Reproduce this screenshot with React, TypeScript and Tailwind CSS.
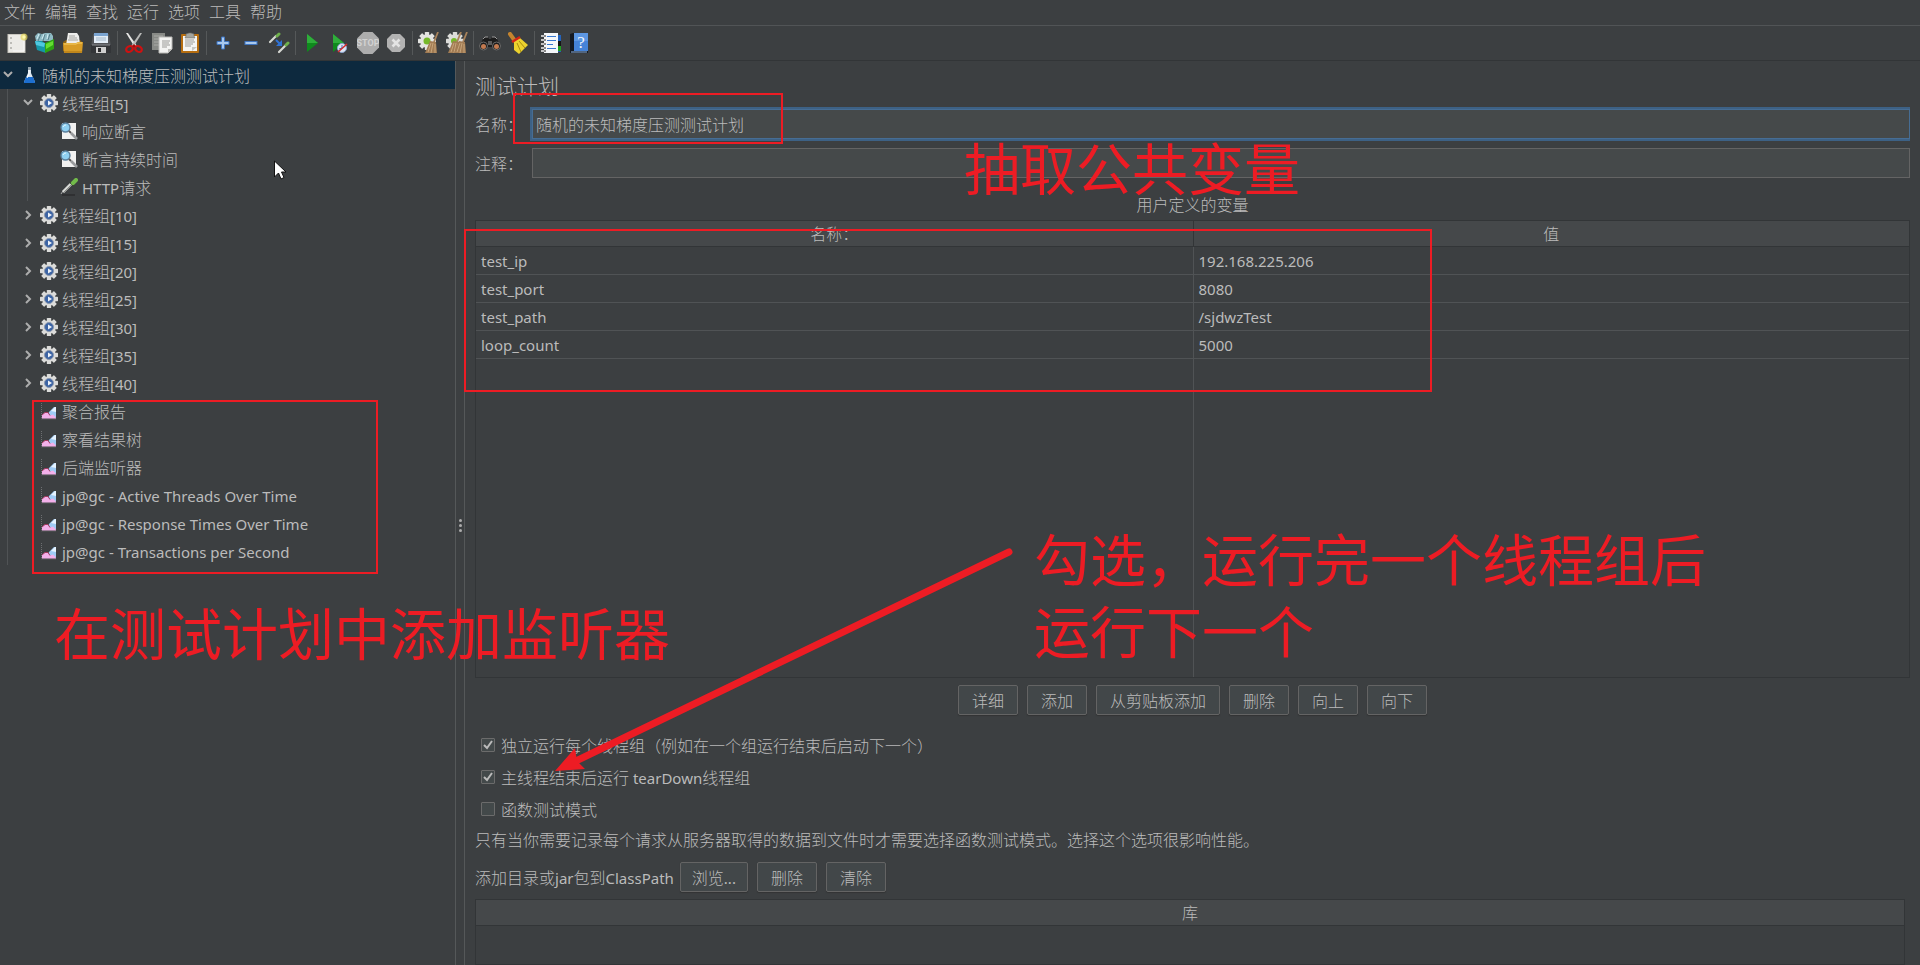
import React from 'react'

const FONT = "font-['Noto_Sans','Noto_Sans_CJK_SC',sans-serif]";

/* ---------- toolbar icons ---------- */

const Icon = ({ children }: { children: React.ReactNode }) => (
    <svg width="22" height="22" viewBox="0 0 22 22" aria-hidden="true">{children}</svg>
);

const Gear = ({ cx, cy, r, fill }: { cx: number; cy: number; r: number; fill: string }) => (
    <g transform={`translate(${cx} ${cy})`} fill={fill}>
        {[0, 45, 90, 135].map((a) => (
            <rect key={a} x={-r * 0.24} y={-r} width={r * 0.48} height={r * 2} rx="0.6" transform={`rotate(${a})`} />
        ))}
        <circle r={r * 0.76} />
    </g>
);

const NewIcon = () => (
    <Icon>
        <rect x="2" y="2.500" width="17" height="18" fill="#ecebe7" stroke="#c9c7c0" />
        <path d="M5 5v2M5 10v2M5 15v2" stroke="#8d8d88" />
        <path d="M7 19h11V9" fill="none" stroke="#f9f9f8" />
        <circle cx="18" cy="5" r="3.500" fill="#e8d85c" opacity="0.7" />
        <circle cx="18" cy="5" r="1.700" fill="#fff9ae" />
    </Icon>
);

const TemplatesIcon = () => (
    <Icon>
        <path d="M1 4 4 1l4 1 3-1 6 0 2 3v5H2z" fill="#8fbac4" />
        <path d="M4 9l3-7M9 9l2-7M14 8l2-6" stroke="#587f8a" />
        <path d="M3 7l2-5M8 7l2-5M13 7l1-5" stroke="#d3edf3" />
        <path d="M1 9h7l4 3v9l-9-3z" fill="#1697a8" />
        <path d="M1 9l10 2-1 4-8-2z" fill="#4fc8e0" />
        <path d="M11 11l9-4v10l-9 4z" fill="#2ea512" />
        <path d="M12 12l7-3v4l-7 4z" fill="#66dd33" />
    </Icon>
);

const OpenIcon = () => (
    <Icon>
        <path d="M1 10l3-2h14l2 2v9H1z" fill="#8c6212" />
        <path d="M6 1h9l2 3 1 9H4z" fill="#eeeeec" />
        <path d="M7 4h6M7 6h8M6 8h10" stroke="#a5a5a1" />
        <path d="M1 11h13l2-1h5l-1 11H2z" fill="#d89c26" />
        <path d="M2 12h12l2-1h4" fill="none" stroke="#f6cf67" />
        <path d="M2 20h18" stroke="#a87010" />
    </Icon>
);

const SaveIcon = () => (
    <Icon>
        <path d="M3 2h16l2 13v6H1v-6z" fill="#54565a" />
        <path d="M4 1h14v10H4z" fill="#e3edf7" />
        <path d="M4 1h14v3H4z" fill="#7ba5d2" />
        <path d="M6 6h10M6 8h10" stroke="#a4b8ca" />
        <path d="M1 13h20v8H1z" fill="#333538" />
        <path d="M2 13h18" stroke="#8a8c90" />
        <path d="M6 15h10v6H6z" fill="#cfcfcf" />
        <path d="M8 16h3v4H8z" fill="#2c2c2e" />
    </Icon>
);

const CutIcon = () => (
    <Icon>
        <path d="M3 1h2l9 13-3 0z" fill="#e6e6e4" />
        <path d="M19 1h-2L8 14l3 0z" fill="#b9bab8" />
        <ellipse cx="6.500" cy="17" rx="3.500" ry="2.700" fill="none" stroke="#cf1111" strokeWidth="2.200" transform="rotate(-28 6.500 17)" />
        <ellipse cx="15.500" cy="17" rx="3.500" ry="2.700" fill="none" stroke="#cf1111" strokeWidth="2.200" transform="rotate(28 15.500 17)" />
        <path d="M9 14l2-2 2 2-2 1z" fill="#a60d0d" />
    </Icon>
);

const CopyIcon = () => (
    <Icon>
        <path d="M1 1h13v17H1z" fill="#888a86" />
        <path d="M3 4h9M3 7h6M3 10h5M3 13h5" stroke="#a9aaa6" />
        <path d="M8 5h13v12l-4 4H8z" fill="#f4f4f2" stroke="#b9b9b6" />
        <path d="M11 9h8M11 11h7M11 13h8M11 15h5" stroke="#9b9b98" />
        <path d="M17 21v-4h4z" fill="#bdbdb9" />
    </Icon>
);

const PasteIcon = () => (
    <Icon>
        <rect x="2" y="2" width="18" height="19" rx="1" fill="#b56d10" />
        <rect x="4" y="4" width="14" height="15" fill="#f5f5f3" />
        <path d="M6 8h9M6 10h10M6 12h8M6 14h6" stroke="#9b9b98" />
        <path d="M13 19v-4h5z" fill="#c7c7c3" />
        <path d="M7 4V2l3-1h2l3 1v2l1 2H6z" fill="#a3a49e" stroke="#6b6c67" strokeWidth="0.600" />
    </Icon>
);

const PlusIcon = () => (
    <Icon>
        <path d="M9.500 5h3v4.500H17v3h-4.500V17h-3v-4.500H5v-3h4.500z" fill="#a9c9ee" stroke="#3f74bf" />
    </Icon>
);

const MinusIcon = () => (
    <Icon>
        <rect x="5" y="9.500" width="12" height="3" fill="#a9c9ee" stroke="#3f74bf" />
    </Icon>
);

const ToggleIcon = () => (
    <Icon>
        <path d="M2 10 8 4" stroke="#d6d8d3" strokeWidth="2.200" strokeLinecap="round" />
        <path d="M9 4l2-2" stroke="#6fb04c" strokeWidth="3" strokeLinecap="round" />
        <path d="M11 20l6-6" stroke="#d6d8d3" strokeWidth="2.200" strokeLinecap="round" />
        <path d="M18 13l2-2" stroke="#6fb04c" strokeWidth="3" strokeLinecap="round" />
        <path d="M8 8l4 4" stroke="#2f72d6" strokeWidth="2" />
        <path d="M14 8v6H8z" fill="#2f72d6" />
    </Icon>
);

const StartIcon = () => (
    <Icon>
        <path d="M6 2l11 9L6 20z" fill="#0f8a1d" />
        <path d="M6 2l11 9H6z" fill="#2fae3b" />
    </Icon>
);

const StartNoPauseIcon = () => (
    <Icon>
        <path d="M4 2l11 9L4 20z" fill="#0f8a1d" />
        <path d="M4 2l11 9H4z" fill="#2fae3b" />
        <circle cx="13" cy="16" r="4.500" fill="#dfe6f2" stroke="#8aa4d0" />
        <path d="M13 13v3l-3 1" fill="none" stroke="#4773b8" />
        <path d="M9 20l9-8" stroke="#d32a2a" strokeWidth="1.500" />
    </Icon>
);

const StopIcon = () => (
    <Icon>
        <path d="M6.500 0h9L22 6.500v9L15.500 22h-9L0 15.500v-9z" fill="#adadad" />
        <text x="11" y="14" textAnchor="middle" fontSize="9" fontFamily="Roboto, sans-serif" fontWeight="bold" fill="#d2d2d2">STOP</text>
    </Icon>
);

const ShutdownIcon = () => (
    <Icon>
        <path d="M7 2h8l5 5v8l-5 5H7l-5-5V7z" fill="#b2b2b2" />
        <path d="M7.500 7.500l7 7M14.500 7.500l-7 7" stroke="#e4e4e4" strokeWidth="2.600" />
    </Icon>
);

const Whisk = ({ x }: { x: number }) => (
    <g transform={`translate(${x} 0)`}>
        <path d="M19 0l-4 10" stroke="#a8825a" strokeWidth="1.800" />
        <path d="M11 9l6 1 1 11H6z" fill="#a27c54" />
        <path d="M12 11l-3 9M14 11l-2 10M16 12v9" stroke="#cfae84" strokeWidth="0.800" />
    </g>
);

const ClearIcon = () => (
    <Icon>
        <Gear cx={9} cy={9} r={9} fill="#e4e4e1" />
        <circle cx="9" cy="9" r="3.500" fill="#76b82a" />
        <Whisk x={1} />
    </Icon>
);

const ClearAllIcon = () => (
    <Icon>
        <Gear cx={9} cy={9} r={9} fill="#dcdcd9" />
        <circle cx="8" cy="9" r="3" fill="#76b82a" />
        <Whisk x={-4} />
        <Whisk x={2} />
    </Icon>
);

const SearchIcon = () => (
    <Icon>
        <path d="M3 9l2-4h4l1 2h2l1-2h4l2 4 3 6H0z" fill="#1c1c1c" />
        <path d="M4 7l2-2h3M18 7l-2-2h-3" fill="none" stroke="#9a9a9a" />
        <circle cx="4.500" cy="14" r="4" fill="#1c1c1c" stroke="#6c6c6c" />
        <circle cx="17.500" cy="14" r="4" fill="#1c1c1c" stroke="#6c6c6c" />
        <circle cx="4.500" cy="14.500" r="2.500" fill="#c27a50" />
        <circle cx="17.500" cy="14.500" r="2.500" fill="#c27a50" />
        <path d="M9 9h4v4H9z" fill="#5a5a5a" />
    </Icon>
);

const BroomIcon = () => (
    <Icon>
        <path d="M3 2l5 7" stroke="#c4842e" strokeWidth="4" strokeLinecap="round" />
        <path d="M7 9l6-3 8 7-9 9-5-4z" fill="#ecd22e" />
        <path d="M10 11l4 9M12 9l6 7" stroke="#a98d0e" />
        <path d="M5 10l8-5" stroke="#d32316" strokeWidth="2.400" />
    </Icon>
);

const FunctionIcon = () => (
    <Icon>
        <path d="M15 3h6v17h-6z" fill="#2463bb" />
        <path d="M18 9h3v5h-3z" fill="#141414" />
        <path d="M18 14h3v5h-3z" fill="#1fa01f" />
        <path d="M4 1h14v20H4z" fill="#f5f7fa" />
        <path d="M7 4.500h9M7 8.500h9M7 16.500h9M7 12.500h6" stroke="#3778d0" />
        <path d="M1 4h5M1 8h5M1 12h5M1 16h5M1 19h5" stroke="#f0f0f0" strokeWidth="1.600" />
        <path d="M4 4h2M4 8h2M4 12h2M4 16h2M4 19h2" stroke="#222" />
    </Icon>
);

const HelpIcon = () => (
    <Icon>
        <path d="M2 2l3-1h15v20H2z" fill="#151a22" />
        <path d="M6 1h14v18H6z" fill="#4583d8" />
        <path d="M6 1h14v8H6z" fill="#5d97e2" />
        <path d="M3 20h16" stroke="#8fb2e0" />
        <text x="13" y="16" textAnchor="middle" fontSize="17" fontFamily="Liberation Serif, serif" fill="#f1f5fb">?</text>
    </Icon>
);

const toolbar: { label: string; icon: React.FC }[][] = [
    [
        { label: '新建', icon: NewIcon },
        { label: '模板', icon: TemplatesIcon },
        { label: '打开', icon: OpenIcon },
        { label: '保存', icon: SaveIcon },
    ],
    [
        { label: '剪切', icon: CutIcon },
        { label: '复制', icon: CopyIcon },
        { label: '粘贴', icon: PasteIcon },
    ],
    [
        { label: '展开', icon: PlusIcon },
        { label: '折叠', icon: MinusIcon },
        { label: '切换', icon: ToggleIcon },
    ],
    [
        { label: '启动', icon: StartIcon },
        { label: '不停顿启动', icon: StartNoPauseIcon },
        { label: '停止', icon: StopIcon },
        { label: '关闭', icon: ShutdownIcon },
    ],
    [
        { label: '清除', icon: ClearIcon },
        { label: '清除全部', icon: ClearAllIcon },
    ],
    [
        { label: '查找', icon: SearchIcon },
        { label: '重置搜索', icon: BroomIcon },
    ],
    [
        { label: '函数助手', icon: FunctionIcon },
        { label: '帮助', icon: HelpIcon },
    ],
];

/* ---------- tree icons ---------- */

const treeIcons = {
    plan: (
        <>
            <path d="M8 1h3v6l4 9v1H4v-1l4-9z" fill="#dce8f2" />
            <path d="M6 11h7l2 5v1H4v-1z" fill="#1d6fd0" />
            <path d="M9 2v6l-2 4" fill="none" stroke="#fff" />
            <path d="M8 1h3v3H8z" fill="#8d9aa5" />
        </>
    ),
    group: (
        <>
            <Gear cx={9} cy={9} r={9} fill="#dcdcda" />
            <circle cx="9" cy="9" r="4.500" fill="#3c64a4" stroke="#8b98ae" />
            <path d="M8 6.500l4 2.500-4 2.500z" fill="#eef3fa" />
        </>
    ),
    assertion: (
        <>
            <rect x="2" y="1" width="14" height="16" fill="#f1f1f0" />
            <circle cx="5.500" cy="5.500" r="4.500" fill="#8fd0f2" stroke="#5a7f9c" strokeWidth="1.400" />
            <path d="M3 5a3 3 0 0 1 3-2" fill="none" stroke="#e4f6ff" />
            <path d="M9 9l2 2" stroke="#555" strokeWidth="2" />
            <path d="M11 11l6 6" stroke="#9a9c9e" strokeWidth="2.600" />
        </>
    ),
    sampler: (
        <>
            <path d="M2 17h13" stroke="#2b2d2e" strokeWidth="1.500" />
            <path d="M1 16l2-3" stroke="#aaa" />
            <path d="M3 14l8-8" stroke="#d9dbd8" strokeWidth="3" />
            <path d="M4 14l7-7" stroke="#8c8f8a" />
            <path d="M10 4l4 4" stroke="#3a4a34" strokeWidth="1.800" />
            <path d="M13 5l3-3" stroke="#72bb4a" strokeWidth="4" strokeLinecap="round" />
        </>
    ),
    listener: (
        <>
            <path d="M1.500 1v16H16" fill="none" stroke="#6d6f71" strokeDasharray="1 1" />
            <path d="M9 10l5-5h2v10l-3 1-5-3z" fill="#9fcbf5" />
            <path d="M11 9l4-4h1v5z" fill="#e6f3ff" />
            <path d="M2 16.500v-4l3-2 3 0 2 3 3-1 3 3v1z" fill="#f3b0ea" />
            <path d="M2 13l3-2.500h3l2 3" fill="none" stroke="#a23a5e" />
        </>
    ),
};

interface TreeItem {
    text: string;
    icon: keyof typeof treeIcons;
    state?: 'open' | 'closed';
    children?: TreeItem[];
}

const tree: TreeItem = {
    text: '随机的未知梯度压测测试计划',
    icon: 'plan',
    state: 'open',
    children: [
        {
            text: '线程组[5]',
            icon: 'group',
            state: 'open',
            children: [
                { text: '响应断言', icon: 'assertion' },
                { text: '断言持续时间', icon: 'assertion' },
                { text: 'HTTP请求', icon: 'sampler' },
            ],
        },
        ...[10, 15, 20, 25, 30, 35, 40].map((n): TreeItem => ({ text: `线程组[${n}]`, icon: 'group', state: 'closed' })),
        { text: '聚合报告', icon: 'listener' },
        { text: '察看结果树', icon: 'listener' },
        { text: '后端监听器', icon: 'listener' },
        { text: 'jp@gc - Active Threads Over Time', icon: 'listener' },
        { text: 'jp@gc - Response Times Over Time', icon: 'listener' },
        { text: 'jp@gc - Transactions per Second', icon: 'listener' },
    ],
};

// Latin runs are set smaller and a step heavier than the Chinese around them
const Label = ({ text }: { text: string }) => (
    <>
        {text.split(/([\x20-\x7e]+)/).filter(Boolean).map((part, i) => (
            /^[\x20-\x7e]/.test(part)
                ? <span key={i} className="text-[15px] font-normal whitespace-pre">{part}</span>
                : <React.Fragment key={i}>{part}</React.Fragment>
        ))}
    </>
);

const TreeNode = ({ item, selected = false }: { item: TreeItem; selected?: boolean }) => (
    <li>
        <div className={`flex h-7 items-center whitespace-nowrap ${selected ? 'bg-[#0d293e]' : ''}`}>
            <span className="flex w-4 shrink-0 justify-center">
                {item.state && (
                    <svg width="10" height="10" viewBox="0 0 10 10" fill="none" stroke="#adadad" strokeWidth="2" aria-hidden="true">
                        <path d={item.state === 'open' ? 'M1 2l4 4 4-4' : 'M3 1l4 4-4 4'} />
                    </svg>
                )}
            </span>
            <svg className="ml-1 shrink-0" width="18" height="18" viewBox="0 0 18 18" aria-hidden="true">
                {treeIcons[item.icon]}
            </svg>
            <span className="ml-1 pt-0.5"><Label text={item.text} /></span>
        </div>
        {item.children && (
            <ul className="ml-[7px] border-l border-[#505355] pl-3">
                {item.children.map((child) => <TreeNode key={child.text} item={child} />)}
            </ul>
        )}
    </li>
);

/* ---------- form parts ---------- */

const Button = ({ children, pad = 'px-[13px]' }: { children: React.ReactNode; pad?: string }) => (
    <button
        type="button"
        className={`h-[30px] rounded-[2px] border border-[#646464] bg-[#424749] pt-0.5 shadow-[0_1px_1px_#323435] ${pad}`}
    >
        {children}
    </button>
);

const Check = ({ text, checked = false }: { text: string; checked?: boolean }) => (
    <label className="flex h-8 items-center gap-1.5 pl-1.5">
        <span className="relative flex">
            <input
                type="checkbox"
                defaultChecked={checked}
                className="peer h-3.5 w-3.5 appearance-none rounded-[1px] border border-[#6b6b6b] bg-[#43494a]"
            />
            <svg
                className="pointer-events-none absolute inset-0 hidden peer-checked:block"
                width="14" height="14" viewBox="0 0 14 14" fill="none" stroke="#bbbbbb" strokeWidth="2" aria-hidden="true"
            >
                <path d="M3 7l3 3 5-7" />
            </svg>
        </span>
        <span className="pt-0.5"><Label text={text} /></span>
    </label>
);

const variables = [
    ['test_ip', '192.168.225.206'],
    ['test_port', '8080'],
    ['test_path', '/sjdwzTest'],
    ['loop_count', '5000'],
];

/* ---------- red marks laid over the window ---------- */

const Annotations = () => (
    <div className="pointer-events-none absolute inset-0 overflow-hidden text-[56px] leading-[72px] font-normal whitespace-nowrap text-[#ed1c24]">
        <div className="absolute top-[93px] left-[513px] h-[51px] w-[270px] border-2" />
        <div className="absolute top-[229px] left-[464px] h-[163px] w-[968px] border-2" />
        <div className="absolute top-[400px] left-[32px] h-[174px] w-[346px] border-2" />
        <p className="absolute top-[132px] left-[964px]">抽取公共变量</p>
        <p className="absolute top-[597px] left-[54px]">在测试计划中添加监听器</p>
        <p className="absolute top-[523px] left-[1034px]">勾选，运行完一个线程组后<br />运行下一个</p>
        <svg className="absolute top-[540px] left-[550px]" width="470" height="240" viewBox="550 540 470 240" aria-hidden="true">
            <path d="M1009 552 576 761" stroke="#ed1c24" strokeWidth="7" strokeLinecap="round" />
            <path d="M555 771l20-23 2 13 8 8z" fill="#ed1c24" />
        </svg>
        <svg className="absolute top-[160px] left-[274px]" width="13" height="20" viewBox="0 0 13 20" aria-hidden="true">
            <path d="M.5 1v16l4-4 2.500 6 3-1.500L7.500 12H12z" fill="#fff" stroke="#111" />
        </svg>
    </div>
);

const App: React.FC = () => {
    return (
        <div className={`relative flex h-screen flex-col overflow-hidden bg-[#3c3f41] text-[16px] leading-6 font-light text-[#bbbbbb] ${FONT}`}>

            {/* MENU */}
            <nav className="flex h-[26px] shrink-0 items-center gap-[9px] border-b border-[#515456] px-1 pb-0.5">
                {['文件', '编辑', '查找', '运行', '选项', '工具', '帮助'].map((m) => (
                    <button key={m} type="button">{m}</button>
                ))}
            </nav>

            {/* TOOLBAR */}
            <div className="flex h-[35px] shrink-0 items-center border-b border-[#323537] pl-[3px]">
                {toolbar.map((group, i) => (
                    <React.Fragment key={i}>
                        {i > 0 && <span className="mx-0.5 h-6 w-px bg-[#555859]" />}
                        {group.map(({ label, icon: ToolIcon }) => (
                            <button key={label} type="button" aria-label={label} className="flex w-7 justify-center">
                                <ToolIcon />
                            </button>
                        ))}
                    </React.Fragment>
                ))}
            </div>

            <div className="flex min-h-0 flex-1">

                {/* TREE */}
                <aside className="w-[455px] shrink-0 overflow-hidden">
                    <ul>
                        <TreeNode item={tree} selected />
                    </ul>
                </aside>

                {/* SPLITTER */}
                <div className="flex w-2.5 shrink-0 flex-col items-center justify-center gap-0.5 border-x border-[#555859] pt-6">
                    <span className="h-[3px] w-[3px] rounded-full bg-[#adadad]" />
                    <span className="h-[3px] w-[3px] rounded-full bg-[#adadad]" />
                    <span className="h-[3px] w-[3px] rounded-full bg-[#adadad]" />
                </div>

                {/* TEST PLAN */}
                <main className="flex min-w-0 flex-1 flex-col px-2.5">
                    <h1 className="mt-[11px] h-7 text-[21px] leading-7">测试计划</h1>

                    <div className="mt-[7px] flex items-center">
                        <label htmlFor="name" className="w-[55px] shrink-0 pt-0.5">名称：</label>
                        <div className="flex min-w-0 flex-1 overflow-hidden py-0.5 pl-0.5">
                            <input
                                id="name"
                                defaultValue="随机的未知梯度压测测试计划"
                                className="h-[30px] min-w-0 flex-1 border border-[#466d94] bg-[#45494a] px-[3px] ring-2 ring-[#3d6185] outline-none"
                            />
                        </div>
                    </div>
                    <div className="mt-[7px] flex items-center">
                        <label htmlFor="comment" className="w-[57px] shrink-0 pt-0.5">注释：</label>
                        <input
                            id="comment"
                            className="h-[30px] min-w-0 flex-1 border border-[#646464] bg-[#45494a] px-[3px] outline-none"
                        />
                    </div>

                    <h2 className="mt-[15px] mb-[3px] text-center">用户定义的变量</h2>

                    <div className="min-h-0 flex-1 border border-[#323537]">
                        <table className="h-full w-full table-fixed border-separate border-spacing-0">
                            <thead>
                                <tr className="h-[26px] bg-[#45484a]">
                                    <th className="border-b border-[#323537] p-0 pt-px font-light">名称：</th>
                                    <th className="border-b border-l border-[#323537] p-0 pt-px font-light">值</th>
                                </tr>
                            </thead>
                            <tbody>
                                {variables.map(([name, value]) => (
                                    <tr key={name} className="h-7 text-[15px] font-normal">
                                        <td className="border-b border-[#505355] px-[5px] py-0">{name}</td>
                                        <td className="border-b border-l border-[#505355] px-[5px] py-0">{value}</td>
                                    </tr>
                                ))}
                                <tr>
                                    <td className="p-0" />
                                    <td className="border-l border-[#505355] p-0" />
                                </tr>
                            </tbody>
                        </table>
                    </div>

                    <div className="mt-[7px] flex justify-center gap-[9px]">
                        {['详细', '添加', '从剪贴板添加', '删除', '向上', '向下'].map((b) => (
                            <Button key={b}>{b}</Button>
                        ))}
                    </div>

                    <div className="mt-3.5">
                        <Check text="独立运行每个线程组（例如在一个组运行结束后启动下一个）" checked />
                        <Check text="主线程结束后运行 tearDown线程组" checked />
                        <Check text="函数测试模式" />
                    </div>

                    <p className="mt-[3px]">只有当你需要记录每个请求从服务器取得的数据到文件时才需要选择函数测试模式。选择这个选项很影响性能。</p>

                    <div className="mt-2.5 flex items-center gap-1.5">
                        <span className="pt-0.5"><Label text="添加目录或jar包到ClassPath" /></span>
                        <div className="flex gap-[9px]">
                            <Button pad="px-[11px]"><Label text="浏览..." /></Button>
                            <Button>删除</Button>
                            <Button>清除</Button>
                        </div>
                    </div>

                    <div className="mt-[7px] mr-[5px] h-[66px] shrink-0 border border-[#323537]">
                        <table className="w-full border-separate border-spacing-0">
                            <thead>
                                <tr className="h-[26px] bg-[#45484a]">
                                    <th className="border-b border-[#323537] p-0 pt-px font-light">库</th>
                                </tr>
                            </thead>
                        </table>
                    </div>
                </main>
            </div>

            <Annotations />
        </div>
    );
};

export default App;
